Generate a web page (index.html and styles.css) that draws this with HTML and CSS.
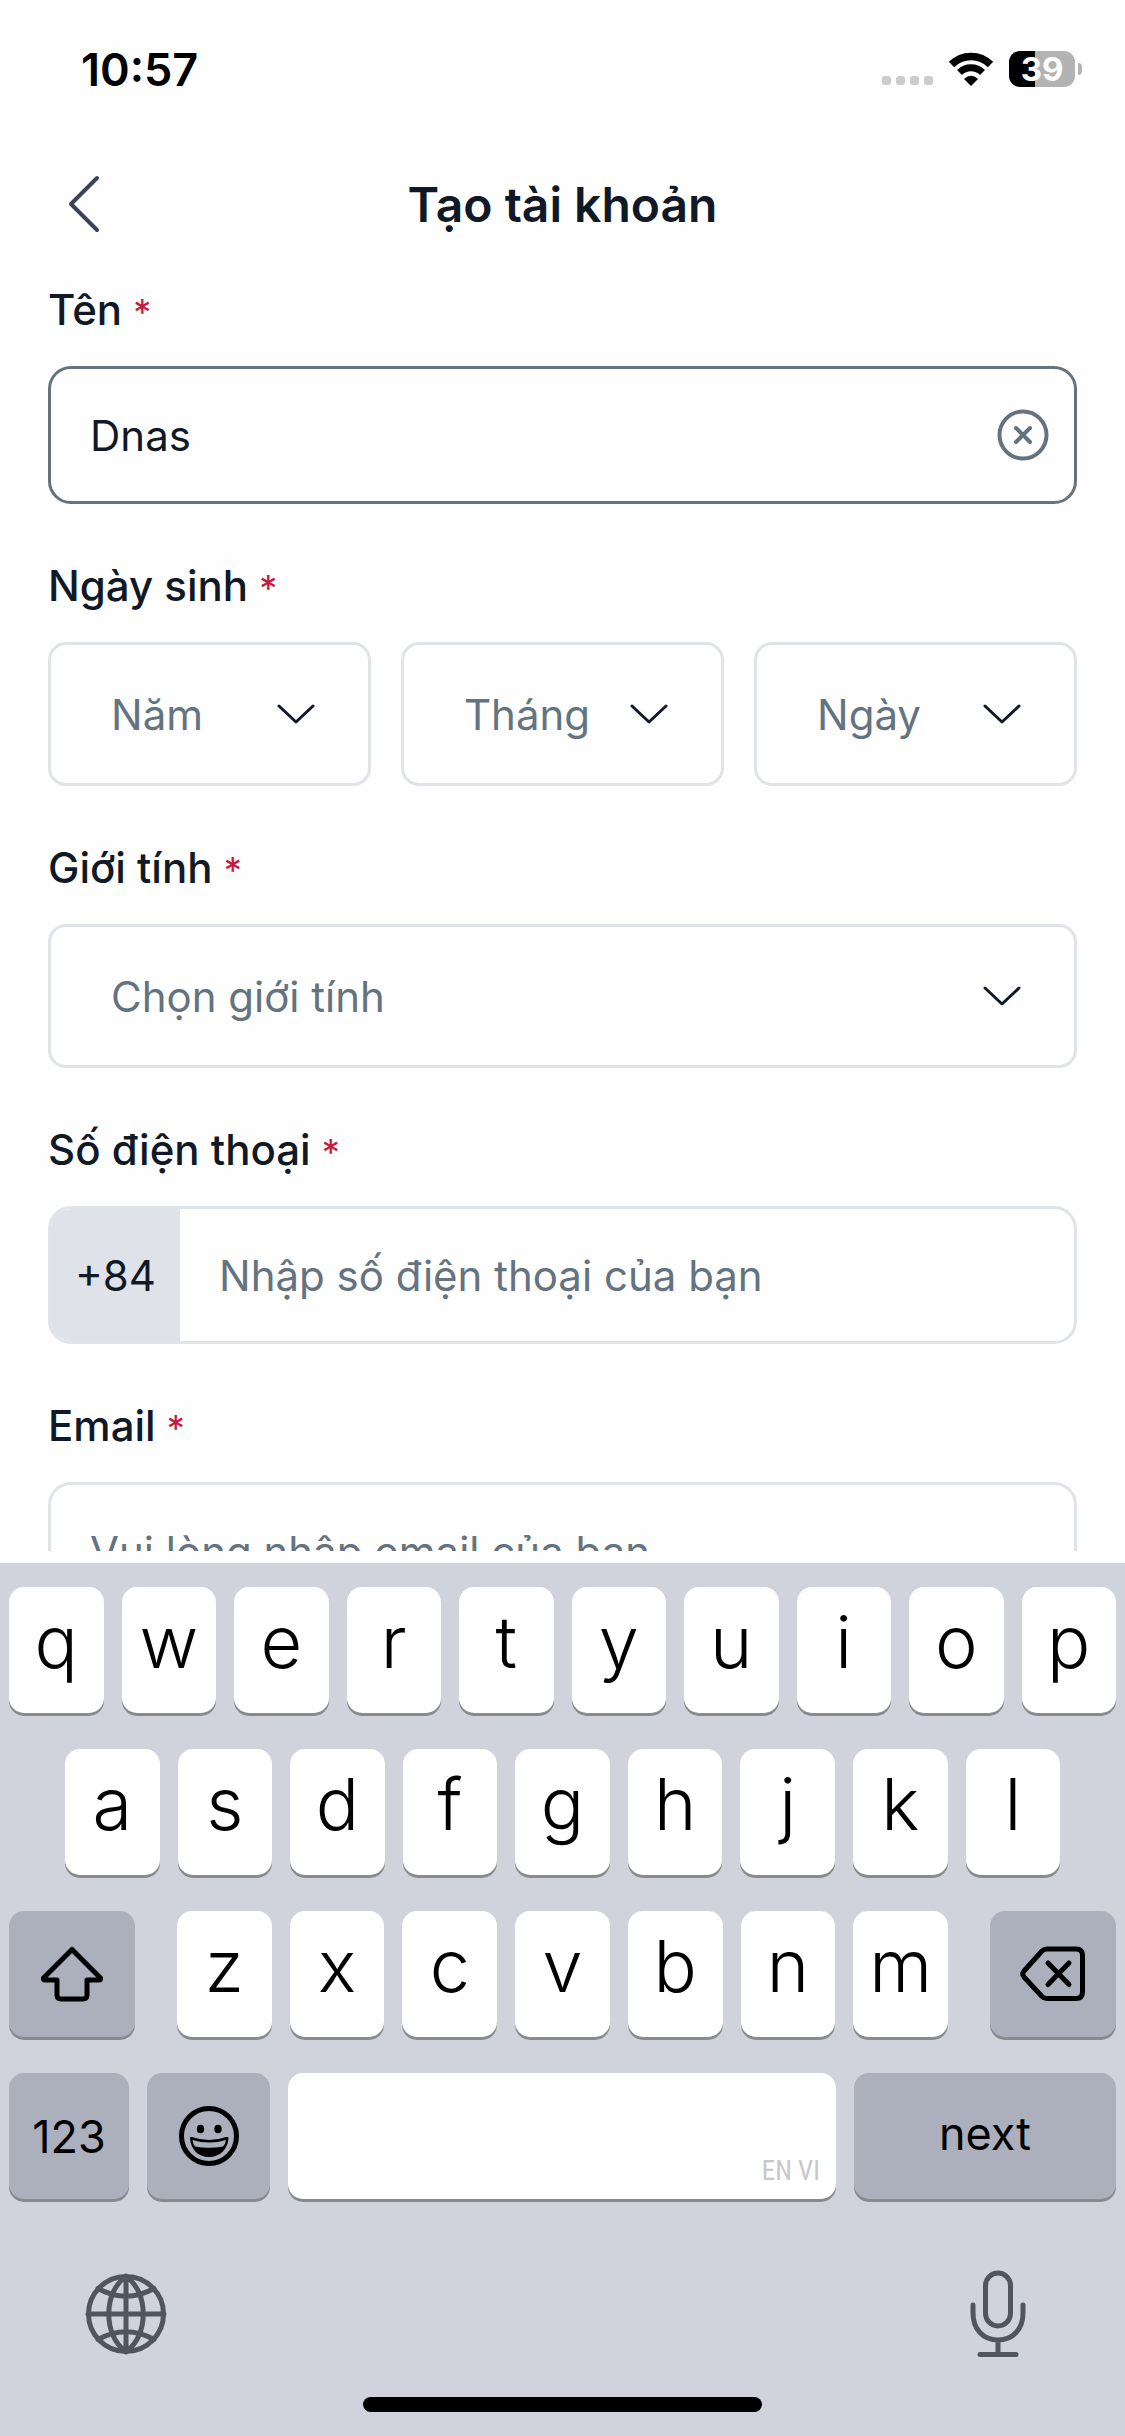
FILE: index.html
```html
<!DOCTYPE html>
<html lang="vi">
<head>
<meta charset="utf-8">
<meta name="viewport" content="width=device-width, initial-scale=1">
<title>Tạo tài khoản</title>
<link rel="stylesheet" href="styles.css">
</head>
<body>
<div class="status-bar">
  <span class="status-time">10:57</span>
  <div class="status-icons">
    <svg class="signal" viewBox="0 0 51 9" width="51" height="9" aria-hidden="true"><rect width="9" height="9" rx="3"/><rect x="14" width="9" height="9" rx="3"/><rect x="28" width="9" height="9" rx="3"/><rect x="42" width="9" height="9" rx="3"/></svg>
    <svg class="wifi" viewBox="0 0 46 34" width="46" height="34" aria-hidden="true"><path d="M3.500 12.500A27.500 27.500 0 0 1 42.500 12.500" stroke-width="7.500"/><path d="M11.500 20.500A16.200 16.200 0 0 1 34.500 20.500" stroke-width="7"/><path class="wifi-dot" d="M16 27Q23 20.500 30 27L23 34Z"/></svg>
    <div class="battery"><span class="battery-body">39</span><span class="battery-tip"></span></div>
  </div>
</div>

<header class="header">
  <button class="back" type="button" aria-label="Quay lại"><svg viewBox="0 0 34 60" width="34" height="60"><path d="M30 4L4 30L30 56"/></svg></button>
  <h1 class="title">Tạo tài khoản</h1>
</header>

<main class="content">
  <form class="form">
    <div class="field">
      <label class="label" for="name">Tên <span class="required">*</span></label>
      <div class="control control-active">
        <input class="input" id="name" type="text" value="Dnas">
        <button class="clear" type="button" aria-label="Xóa"><svg viewBox="0 0 52 52" width="52" height="52"><circle cx="26" cy="26" r="23.500"/><path d="M19 19L33 33M33 19L19 33"/></svg></button>
      </div>
    </div>

    <div class="field">
      <label class="label" for="year">Ngày sinh <span class="required">*</span></label>
      <div class="date-row">
        <div class="control control-select">
          <select class="select" id="year"><option>Năm</option></select>
          <svg class="chevron" viewBox="0 0 38 20" width="38" height="20"><path d="M2 2L19 18L36 2"/></svg>
        </div>
        <div class="control control-select">
          <select class="select" aria-label="Tháng"><option>Tháng</option></select>
          <svg class="chevron" viewBox="0 0 38 20" width="38" height="20"><path d="M2 2L19 18L36 2"/></svg>
        </div>
        <div class="control control-select">
          <select class="select" aria-label="Ngày"><option>Ngày</option></select>
          <svg class="chevron" viewBox="0 0 38 20" width="38" height="20"><path d="M2 2L19 18L36 2"/></svg>
        </div>
      </div>
    </div>

    <div class="field">
      <label class="label" for="gender">Giới tính <span class="required">*</span></label>
      <div class="control control-select">
        <select class="select" id="gender"><option>Chọn giới tính</option></select>
        <svg class="chevron" viewBox="0 0 38 20" width="38" height="20"><path d="M2 2L19 18L36 2"/></svg>
      </div>
    </div>

    <div class="field">
      <label class="label" for="phone">Số điện thoại <span class="required">*</span></label>
      <div class="control control-phone">
        <span class="prefix">+84</span>
        <input class="input" id="phone" type="tel" placeholder="Nhập số điện thoại của bạn">
      </div>
    </div>

    <div class="field">
      <label class="label" for="email">Email <span class="required">*</span></label>
      <div class="control">
        <input class="input" id="email" type="email" placeholder="Vui lòng nhập email của bạn">
      </div>
    </div>
  </form>
</main>

<section class="keyboard" aria-label="Bàn phím">
  <div class="keys">
    <div class="key-row">
      <button class="key">q</button><button class="key">w</button><button class="key">e</button><button class="key">r</button><button class="key">t</button><button class="key">y</button><button class="key">u</button><button class="key">i</button><button class="key">o</button><button class="key">p</button>
    </div>
    <div class="key-row key-row-inset">
      <button class="key">a</button><button class="key">s</button><button class="key">d</button><button class="key">f</button><button class="key">g</button><button class="key">h</button><button class="key">j</button><button class="key">k</button><button class="key">l</button>
    </div>
    <div class="key-row key-row-shift">
      <button class="key key-dark" aria-label="Shift"><svg class="key-icon" viewBox="0 0 64 56" width="64" height="56"><path d="M32 3.500L60.500 32Q61 34 59 34H47V49Q47 53 43 53H21Q17 53 17 49V34H5Q3 34 3.500 32Z"/></svg></button>
      <div class="key-row key-row-letters">
        <button class="key">z</button><button class="key">x</button><button class="key">c</button><button class="key">v</button><button class="key">b</button><button class="key">n</button><button class="key">m</button>
      </div>
      <button class="key key-dark" aria-label="Xóa lùi"><svg class="key-icon" viewBox="0 0 66 56" width="66" height="56"><path d="M27 3H56Q62.500 3 62.500 9V46Q62.500 52.500 56 52.500H27Q24 52.500 22 50.500L4 31Q1.500 28 4 25L22 5Q24 3 27 3Z"/><path d="M28 17L49 38.500M49 17L28 38.500"/></svg></button>
    </div>
    <div class="key-row key-row-bottom">
      <button class="key key-dark key-numbers">123</button>
      <button class="key key-dark" aria-label="Emoji"><svg class="key-emoji" viewBox="0 0 60 60" width="60" height="60"><circle class="face" cx="30" cy="30" r="27.500"/><ellipse cx="21.500" cy="23" rx="3.700" ry="4.300"/><ellipse cx="39" cy="23" rx="3.700" ry="4.300"/><path fill-rule="evenodd" d="M11 32Q11 30.500 13 31Q30 37 47 31Q49.500 30.500 49.500 32C49 43 41 51 30 51S11.500 43 11 32ZM13.500 34Q14 38 16 40.500Q30 43 44 40.500Q46.500 38 47 34Q30 39 13.500 34Z"/></svg></button>
      <button class="key key-space" aria-label="Dấu cách">EN VI</button>
      <button class="key key-dark key-next">next</button>
    </div>
  </div>
  <div class="tools">
    <button class="tool" aria-label="Ngôn ngữ"><svg viewBox="0 0 82 82" width="82" height="82"><circle cx="41" cy="41" r="37.500"/><path d="M41 3V79M3 41H79M41 3.500C18 19 18 63 41 78.500M41 3.500C64 19 64 63 41 78.500M13 15.500Q41 31 69 15.500M13 66.500Q41 51 69 66.500"/></svg></button>
    <button class="tool" aria-label="Đọc chính tả"><svg viewBox="0 0 60 88" width="60" height="88"><rect x="17.500" y="3" width="25" height="53" rx="12.500"/><path d="M5 35V43C5 59 15 70 30 70S55 59 55 43V35M30 70V84.500M12 84.500H48"/></svg></button>
  </div>
  <div class="home-indicator"></div>
</section>
</body>
</html>
```
FILE: styles.css
```css
* {
  box-sizing: border-box;
}

body {
  margin: 0;
  height: 100vh;
  display: flex;
  flex-direction: column;
  overflow: hidden;
  background: #fefefe;
  color: #111927;
  font-family: Inter, "Noto Sans", sans-serif;
  font-size: 42px;
}

button,
input,
select {
  margin: 0;
  padding: 0;
  border: 0;
  background: none;
  color: inherit;
  font: inherit;
}

svg {
  display: block;
  fill: none;
  stroke-linecap: round;
  stroke-linejoin: round;
}

/* Status bar */
.status-bar {
  flex: none;
  display: flex;
  align-items: center;
  justify-content: space-between;
  height: 138px;
  padding: 0 43px 0 81px;
  color: #000;
}

.status-time {
  font-size: 45px;
  font-weight: 600;
}

.status-icons {
  display: flex;
  align-items: center;
  gap: 15px;
}

.signal {
  align-self: flex-end;
  margin-bottom: 2px;
  fill: #ccc;
}

.wifi {
  stroke: #000;
  stroke-linecap: butt;
}

.wifi-dot {
  fill: #000;
  stroke: none;
}

.battery {
  display: flex;
  align-items: center;
  gap: 3px;
}

.battery-body {
  width: 66px;
  height: 36px;
  border-radius: 11px;
  background: linear-gradient(90deg, #000 39%, #b3b3b3 39%);
  color: #fff;
  font-size: 33px;
  font-weight: 700;
  line-height: 36px;
  text-align: center;
}

.battery-tip {
  width: 4px;
  height: 12px;
  border-radius: 0 6px 6px 0;
  background: #b3b3b3;
}

/* Header */
.header {
  flex: none;
  display: grid;
  grid-template-columns: 60px 1fr 60px;
  align-items: center;
  height: 132px;
  padding: 0 48px;
}

.back {
  justify-self: center;
  padding-left: 12px;
  stroke: #3b4356;
  stroke-width: 4;
}

.title {
  margin: 0;
  font-size: 48px;
  font-weight: 600;
  text-align: center;
}

/* Form */
.content {
  flex: 1;
  min-height: 0;
  margin-bottom: 12px;
  padding: 8px 48px 0;
  overflow: hidden;
}

.form {
  display: flex;
  flex-direction: column;
  gap: 50px;
}

.field {
  display: flex;
  flex-direction: column;
  gap: 24px;
}

.label {
  font-weight: 500;
  line-height: 64px;
}

.required {
  color: #c8193c;
  font-size: 36px;
  font-weight: 400;
  line-height: 1;
}

.date-row {
  display: grid;
  grid-template-columns: repeat(3, 1fr);
  gap: 30px;
}

.control {
  display: grid;
  align-items: center;
  border: 3px solid #e0e3e8;
  border-radius: 23px;
  overflow: hidden;
}

.control-active {
  border-color: #64737f;
}

.control-select {
  border-radius: 18px;
}

.control-phone {
  grid-template-columns: 129px 1fr;
}

.input,
.select {
  width: 100%;
  min-width: 0;
  outline: none;
}

.input {
  height: 132px;
  padding: 0 39px;
}

.input::placeholder {
  color: #64737f;
  opacity: 1;
}

.control > .select,
.control > .chevron,
.control-active > .input,
.control-active > .clear {
  grid-area: 1 / 1;
}

.select {
  height: 138px;
  padding-left: 60px;
  appearance: none;
  color: #64737f;
}

.chevron {
  justify-self: end;
  margin-right: 53px;
  stroke: #111927;
  stroke-width: 3;
  pointer-events: none;
}

.clear {
  justify-self: end;
  margin-right: 25px;
  stroke: #64737f;
  stroke-width: 4;
}

.prefix {
  display: flex;
  align-items: center;
  justify-content: center;
  height: 100%;
  background: #dfe3e9;
}

/* Keyboard */
.keyboard {
  flex: none;
  padding: 24px 9px;
  background: #d0d3db;
  color: #000;
}

.keys {
  display: flex;
  flex-direction: column;
  gap: 36px;
}

.key-row {
  display: flex;
  gap: 18px;
}

.key-row-inset {
  padding: 0 56px;
}

.key-row-shift {
  display: grid;
  grid-template-columns: 126px 1fr 126px;
  gap: 42px;
}

.key-row-bottom {
  display: grid;
  grid-template-columns: 120px 123px 1fr 262px;
}

.key {
  display: flex;
  flex: 1;
  align-items: center;
  justify-content: center;
  height: 126px;
  padding-bottom: 18px;
  border-radius: 15px;
  background: #fff;
  box-shadow: 0 3px 0 #888a8e;
  font-size: 72px;
  font-weight: 350;
}

.key-dark {
  padding-bottom: 0;
  background: #abb0bc;
}

.key-icon {
  stroke: #000;
  stroke-width: 5;
}

.key-emoji {
  fill: #000;
}

.face {
  fill: none;
  stroke: #000;
  stroke-width: 5;
}

.key-numbers,
.key-next {
  font-size: 45px;
  font-weight: 400;
}

.key-next {
  padding-bottom: 6px;
}

.key-space {
  align-items: flex-end;
  justify-content: flex-end;
  padding: 0 16px 12px;
  color: #c8c8c8;
  font-family: "Roboto Condensed", "Liberation Sans Narrow", "Liberation Sans", sans-serif;
  font-size: 27px;
  font-weight: 400;
}

.tools {
  display: flex;
  align-items: center;
  justify-content: space-between;
  padding: 71px 88px 39px 76px;
}

.tool {
  stroke: #50565e;
  stroke-width: 5;
}

.home-indicator {
  width: 36%;
  height: 15px;
  margin: 0 auto;
  border-radius: 8px;
  background: #000;
}
```
